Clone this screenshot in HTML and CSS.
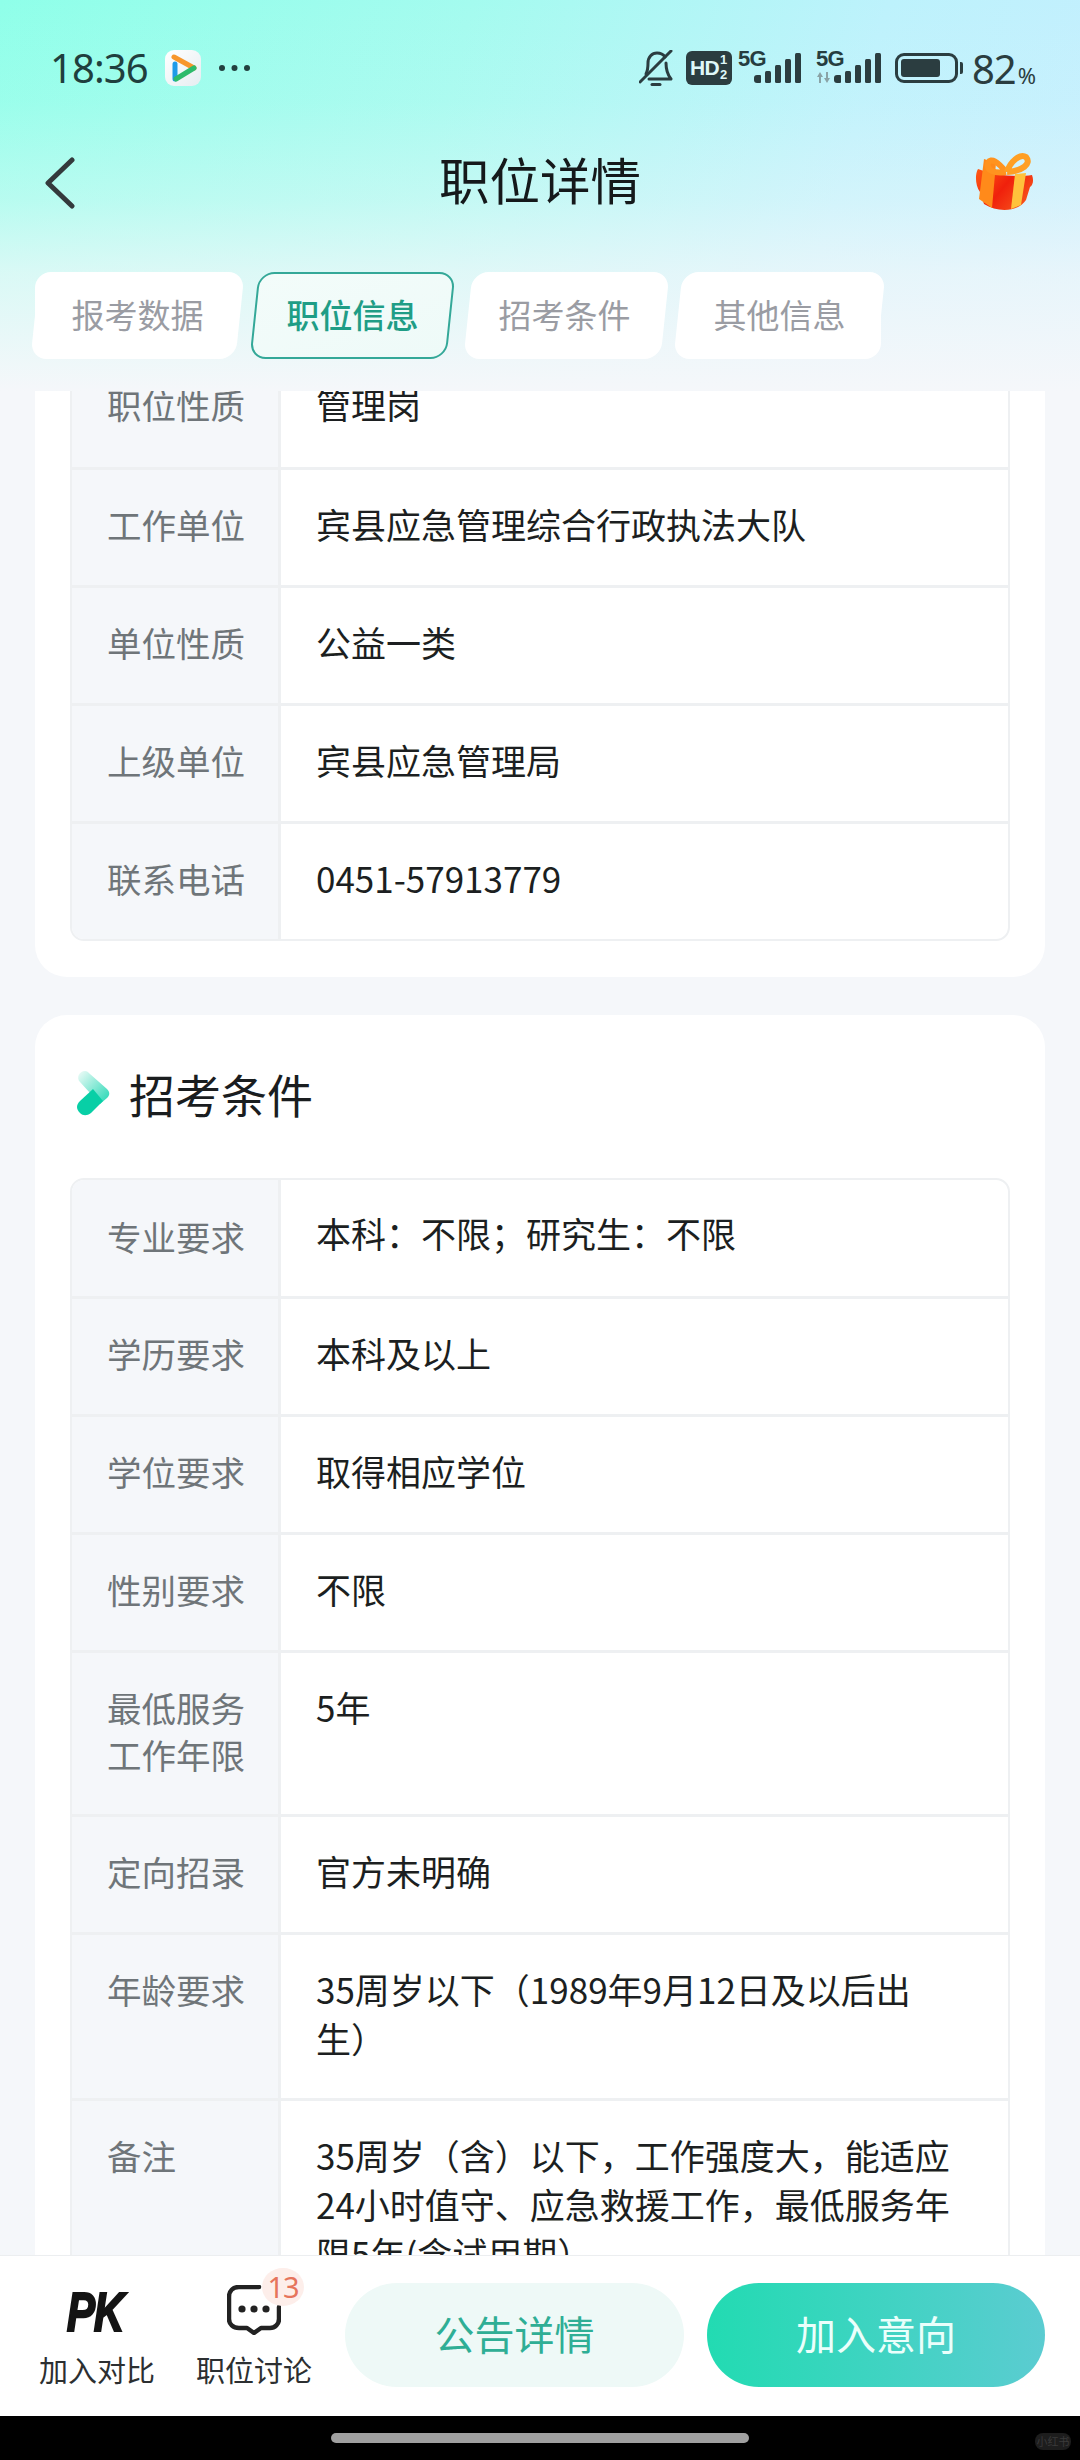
FILE: index.html
```html
<!DOCTYPE html>
<html lang="zh">
<head>
<meta charset="utf-8">
<title>职位详情</title>
<link rel="stylesheet" href="styles.css">
</head>
<body>
<div class="screen">
  <header class="top">
    <div class="status">
      <span class="time">18:36</span>
      <svg class="app-icon" viewBox="0 0 36 36">
        <defs>
          <linearGradient id="appbg" x1="0" y1="0" x2="1" y2="1"><stop offset="0" stop-color="#fff"/><stop offset="1" stop-color="#e6edf1"/></linearGradient>
        </defs>
        <rect width="36" height="36" rx="9" fill="url(#appbg)"/>
        <path d="M9 7 L29 18" stroke="#f7962b" stroke-width="5" stroke-linecap="round" fill="none"/>
        <path d="M10 14 L10 29" stroke="#1f9be8" stroke-width="5" stroke-linecap="round" fill="none"/>
        <path d="M11 29 L29 18" stroke="#2dbb6b" stroke-width="5" stroke-linecap="round" fill="none"/>
      </svg>
      <svg class="dots" viewBox="0 0 31 6"><circle cx="3" cy="3" r="3"/><circle cx="15.5" cy="3" r="3"/><circle cx="28" cy="3" r="3"/></svg>
      <span class="status-space"></span>
      <svg class="bell" viewBox="0 0 34 37" fill="none" stroke="#2b3d40" stroke-width="3" stroke-linecap="round" stroke-linejoin="round">
        <path d="M7 24 C9 20 9 16 9 13 C9 7 13 3 18 3 C21 3 24 4 26 7"/>
        <path d="M27 13 C27 20 28 24 32 29 L10 29"/>
        <path d="M1 32 L32 1"/>
        <path d="M13 34.5 L21 34.5" stroke-width="3"/>
      </svg>
      <span class="hd">HD<span class="hd-frac"><i>1</i><i>2</i></span></span>
      <span class="sim">
        <span class="sim-5g">5G</span>
        <span class="bars"><i class="b1"></i><i class="b2"></i><i class="b3"></i><i class="b4"></i><i class="b5"></i></span>
      </span>
      <span class="sim sim-two">
        <span class="sim-5g">5G</span>
        <svg class="arrows" viewBox="0 0 15 11"><path d="M1 5 L4 0 L4 0 L7 5 L5 5 L5 11 L3 11 L3 5Z M8 6 L10 6 L10 0 L12 0 L12 6 L14 6 L11 11Z" fill="#8aa3a6"/></svg>
        <span class="bars"><i class="b1"></i><i class="b2"></i><i class="b3"></i><i class="b4"></i><i class="b5"></i></span>
      </span>
      <span class="battery"><span class="battery-fill"></span></span><span class="battery-nub"></span>
      <span class="pct">82<small>%</small></span>
    </div>
    <div class="nav">
      <svg class="back" viewBox="0 0 30 52" fill="none" stroke="#333a3c" stroke-width="5" stroke-linecap="round" stroke-linejoin="round"><path d="M27 3 L3 26 L27 49"/></svg>
      <h1 class="title">职位详情</h1>
      <svg class="gift" viewBox="0 0 90 80">
        <defs>
          <linearGradient id="giftbody" x1="0" y1="0" x2="1" y2="0.6"><stop offset="0" stop-color="#ff5a14"/><stop offset="0.55" stop-color="#f0200c"/><stop offset="1" stop-color="#f6501a"/></linearGradient>
        </defs>
        <path d="M18 29 C30 34 55 38 72 35 C74 40 73 45 70 47 L66 60 C58 72 38 73 24 64 L20 52 C15 45 15 34 18 29Z" fill="url(#giftbody)"/>
        <path d="M24 19 L36 23 L32 68 L19 59Z" fill="#ff8a1a"/>
        <path d="M55 34 L66 33 L61 65 L51 69Z" fill="#ffc23c"/>
        <path d="M46 32 C38 22 31 17 28 23 C26 30 34 34 46 32" fill="none" stroke="#ff931f" stroke-width="6" stroke-linejoin="round"/>
        <path d="M47 32 C50 22 60 13 66 17 C72 24 62 31 47 32" fill="none" stroke="#ff9f24" stroke-width="6" stroke-linejoin="round"/>
      </svg>
    </div>
    <div class="tabs">
      <a class="tab tab-first"><span>报考数据</span></a>
      <a class="tab tab-active tab-second"><span>职位信息</span></a>
      <a class="tab tab-third"><span>招考条件</span></a>
      <a class="tab tab-last"><span>其他信息</span></a>
    </div>
  </header>

  <main class="scroller">
    <div class="scroll-inner">
      <section class="card card-first">
        <div class="table">
          <div class="row"><div class="label">职位性质</div><div class="value">管理岗</div></div>
          <div class="row"><div class="label">工作单位</div><div class="value">宾县应急管理综合行政执法大队</div></div>
          <div class="row"><div class="label">单位性质</div><div class="value">公益一类</div></div>
          <div class="row"><div class="label">上级单位</div><div class="value">宾县应急管理局</div></div>
          <div class="row"><div class="label">联系电话</div><div class="value">0451-57913779</div></div>
        </div>
      </section>
      <section class="card">
        <h2 class="card-title">
          <svg class="mark" viewBox="0 0 34 46">
            <defs>
              <linearGradient id="markg" x1="0.1" y1="0" x2="0.9" y2="0.8"><stop offset="0" stop-color="#e6faf5"/><stop offset="1" stop-color="#3fdcbd"/></linearGradient>
            </defs>
            <path d="M4 12 C0 8 3 1 9 1 C11 1 12 2 14 4 L31 19 C34 22 34 25 31 28 L24 34 L4 12Z" fill="url(#markg)"/>
            <path d="M17 19 L27 31 L15 43 C11 46 7 46 4 43 C0 39 0 35 4 31Z" fill="#08cfa6"/>
          </svg>
          招考条件
        </h2>
        <div class="table">
          <div class="row"><div class="label">专业要求</div><div class="value">本科：不限；研究生：不限</div></div>
          <div class="row"><div class="label">学历要求</div><div class="value">本科及以上</div></div>
          <div class="row"><div class="label">学位要求</div><div class="value">取得相应学位</div></div>
          <div class="row"><div class="label">性别要求</div><div class="value">不限</div></div>
          <div class="row"><div class="label">最低服务<br>工作年限</div><div class="value">5年</div></div>
          <div class="row"><div class="label">定向招录</div><div class="value">官方未明确</div></div>
          <div class="row"><div class="label">年龄要求</div><div class="value">35周岁以下（1989年9月12日及以后出生）</div></div>
          <div class="row"><div class="label">备注</div><div class="value">35周岁（含）以下，工作强度大，能适应24小时值守、应急救援工作，最低服务年限5年(含试用期）</div></div>
        </div>
      </section>
    </div>
  </main>

  <footer class="bottom">
    <div class="action">
      <span class="pk">PK</span>
      <span class="action-label">加入对比</span>
    </div>
    <div class="action">
      <span class="chat-wrap">
        <svg class="chat" viewBox="0 0 54 50" fill="none">
          <path d="M32 2 L12 2 C6 2 2 6 2 12 L2 34 C2 39 6 43 12 43 L20 43 L27 48 L34 43 L43 43 C48 43 52 39 52 34 L52 22" stroke="#222" stroke-width="4.5" stroke-linecap="round" stroke-linejoin="round"/>
          <circle cx="15" cy="24" r="3.6" fill="#222"/><circle cx="27" cy="24" r="3.6" fill="#222"/><circle cx="39" cy="24" r="3.6" fill="#222"/>
        </svg>
        <span class="badge">13</span>
      </span>
      <span class="action-label">职位讨论</span>
    </div>
    <a class="btn btn-light">公告详情</a>
    <a class="btn btn-primary">加入意向</a>
  </footer>
  <div class="sysnav"><span class="pill"></span><span class="mark-wm">小红书</span></div>
</div>
</body>
</html>
```

FILE: styles.css
```css
* { box-sizing: border-box; }
html, body { margin: 0; padding: 0; }
body {
  width: 1080px;
  height: 2460px;
  overflow: hidden;
  background: #f5f7fa;
  font-family: "Noto Sans CJK SC", "Noto Sans", sans-serif;
}
.screen { display: flex; flex-direction: column; height: 2460px; }

/* header */
.top {
  height: 391px;
  flex: none;
  background:
    linear-gradient(180deg, rgba(245,247,250,0) 0%, rgba(245,247,250,.1) 26%, rgba(245,247,250,.38) 51%, rgba(245,247,250,.72) 70%, rgba(245,247,250,1) 100%),
    linear-gradient(105deg, #8fffe9 0%, #a4fbef 40%, #bdf2fc 75%, #c4effe 100%);
}
.status {
  height: 136px;
  padding: 49px 44px 0 50px;
  display: flex;
  align-items: flex-start;
  color: #263d3f;
}
.time { font: 400 40px/37px "Noto Sans", sans-serif; width: 115px; letter-spacing: -.9px; color: #1f3f3e; }
.app-icon { width: 36px; height: 36px; flex: none; margin-top: 1px; }
.dots { width: 31px; height: 6px; margin: 16px 0 0 18px; fill: #23403f; flex: none; }
.status-space { flex: 1; }
.bell { width: 34px; height: 37px; flex: none; margin-top: 1px; }
.hd {
  width: 46px; height: 34px; margin: 2px 0 0 13px; background: #2b3d40; border-radius: 6px;
  color: #dff8f8; font: 700 21px/34px "Liberation Sans", sans-serif; padding-left: 4px;
  display: flex; letter-spacing: -.6px; flex: none;
}
.hd-frac { display: flex; flex-direction: column; margin-left: 1px; }
.hd-frac i { font: 700 13px/14px "Liberation Sans", sans-serif; display: block; margin-top: 2px; margin-bottom: -1px; }
.sim { position: relative; width: 63px; height: 37px; margin-left: 6px; flex: none; }
.sim-two { width: 65px; margin-left: 15px; }
.sim-5g { position: absolute; left: 0; top: 0; font: 700 22px/20px "Liberation Sans", sans-serif; color: #263d3f; letter-spacing: -.6px; }
.bars { position: absolute; right: 0; top: 4px; height: 30px; width: 47px; display: flex; align-items: flex-end; justify-content: space-between; }
.bars i { display: block; width: 6px; background: #2b3d40; border-radius: 1.5px; }
.bars .b1 { height: 8px; width: 7px; border-radius: 3px 1px 1px 3px; }
.bars .b2 { height: 12px; }
.bars .b3 { height: 18px; }
.bars .b4 { height: 24px; }
.bars .b5 { height: 30px; }
.arrows { position: absolute; left: 0; top: 23px; width: 15px; height: 11px; }
.battery {
  width: 63px; height: 30px; margin: 4px 0 0 14px; border: 3px solid #2b3d40; border-radius: 9px;
  padding: 3px; flex: none;
}
.battery-fill { display: block; width: 39px; height: 18px; background: #2b3d40; border-radius: 3px; }
.battery-nub { width: 3px; height: 12px; margin: 13px 0 0 2px; background: #2b3d40; border-radius: 0 2px 2px 0; flex: none; }
.pct { font: 400 40px/37px "Noto Sans", sans-serif; color: #2b3d40; margin: 1px 0 0 9px; white-space: nowrap; letter-spacing: -1px; }
.pct small { font-size: 22px; margin-left: 2px; letter-spacing: 0; }

.nav { height: 136px; position: relative; display: flex; align-items: flex-start; justify-content: center; }
.back { position: absolute; left: 45px; top: 21px; width: 30px; height: 52px; }
.title { margin: 6px 0 0; font: 400 50.5px/72px "Noto Sans CJK SC", sans-serif; color: #15191b; }
.gift { position: absolute; left: 960px; top: 4px; width: 90px; height: 80px; }

.tabs { height: 87px; padding-left: 35px; display: flex; }
.tab {
  position: relative; display: flex; align-items: center; justify-content: center;
  height: 87px; padding-bottom: 3px; color: #9a9ca3; font-size: 33px; line-height: 48px;
}
.tab span { position: relative; }
.tab::before {
  content: ""; position: absolute; inset: 0 0; background: #fff; border-radius: 16px;
  transform: skewX(-6deg);
}
.tab-first { width: 205px; }
.tab-first::after { content: ""; position: absolute; left: 0; top: 0; bottom: 0; width: 60%; background: #fff; border-radius: 16px; }
.tab-first span { z-index: 1; }
.tab-second { width: 197px; margin-left: 14px; color: #1f9d86; font-weight: 500; }
.tab-active::before { background: linear-gradient(160deg, #f3fcfa, #eefaf8); border: 2px solid #34a898; }
.tab-third { width: 197px; margin-left: 17px; }
.tab-third span { left: -2px; }
.tab-last { width: 203px; margin-left: 13px; }
.tab-last::after { content: ""; position: absolute; right: 0; top: 0; bottom: 0; width: 60%; background: #fff; border-radius: 16px; }
.tab-last span { z-index: 1; }

/* content */
.scroller { flex: 1; min-height: 0; overflow: hidden; }
.scroll-inner { margin-top: -43px; padding: 0 35px; }
.card { background: #fff; border-radius: 32px; padding: 0 35px 24px; margin-bottom: 38px; }
.card-first { border-radius: 0 0 32px 32px; padding-bottom: 36px; }
.card-title {
  margin: 0; height: 163px; padding-top: 41px; display: flex; align-items: flex-start; gap: 19px;
  font: 400 46px/74px "Noto Sans CJK SC", sans-serif; color: #1a1d1f;
}
.mark { width: 34px; height: 46px; margin: 14px 0 0 6px; flex: none; }
.table { border: 2px solid #eef0f2; border-radius: 14px; overflow: hidden; }
.row { display: flex; border-top: 3px solid #eef0f2; min-height: 118px; }
.row:first-child { border-top: none; min-height: 117px; }
.card-title + .table .row:first-child { min-height: 116px; }
.label {
  width: 209px; flex: none; background: #f5f7fa; border-right: 3px solid #eef0f2;
  padding: 31px 0 36px 35px; color: #6f7579; font-size: 34.5px; line-height: 47px;
}
.value {
  flex: 1; padding: 29px 50px 36px 35px; color: #1c1f21; font-size: 35px; line-height: 49px;
}
.card-title + .table .row:first-child .label { padding-top: 33px; padding-bottom: 32px; }
.card-title + .table .row:first-child .value { padding-top: 28px; padding-bottom: 35px; }

/* bottom bar */
.bottom {
  height: 161px; flex: none; background: #fff; border-top: 1px solid #eceef0;
  display: flex; position: relative; padding: 27px 35px 0 38px;
}
.action { width: 118px; display: flex; flex-direction: column; align-items: center; margin-right: 39px; flex: none; }
.action:nth-child(2) { margin-right: 0; }
.pk {
  height: 60px; font: italic 900 56px/58px "Liberation Sans", sans-serif; color: #141414;
  letter-spacing: -2px; -webkit-text-stroke: 2px #141414; transform: translateX(-2px) scaleX(.76);
}
.chat-wrap { position: relative; display: block; width: 54px; height: 60px; }
.chat { position: absolute; left: 0; top: 2px; width: 54px; height: 50px; }
.badge {
  position: absolute; left: 35px; top: -15px; width: 42px; height: 38px; border-radius: 50%;
  background: #fdeeea; color: #e6745c; font: 400 29px/38px "Noto Sans", sans-serif; text-align: center; letter-spacing: -1px;
}
.action-label { margin-top: 5px; color: #2c2f31; font-size: 29px; line-height: 42px; white-space: nowrap; }
.btn {
  height: 104px; display: flex; align-items: center; justify-content: center; border-radius: 52px;
  font-size: 40px; flex: none; padding-bottom: 4px;
}
.btn-light { width: 339px; margin-left: 32px; background: #eef9f7; color: #2fae95; }
.btn-primary { width: 338px; margin-left: 23px; background: linear-gradient(90deg, #22dbb2, #5bccd1); color: #eafffb; }

.sysnav { height: 44px; flex: none; background: #000; position: relative; }
.pill { position: absolute; left: 331px; top: 17px; width: 418px; height: 10px; border-radius: 5px; background: #a0a0a0; }
.mark-wm {
  position: absolute; left: 1035px; top: 17px; width: 36px; height: 17px; border-radius: 8px;
  background: #1d1d1d; color: #3a3a3a; font-size: 11px; line-height: 17px; text-align: center; white-space: nowrap;
}
```
